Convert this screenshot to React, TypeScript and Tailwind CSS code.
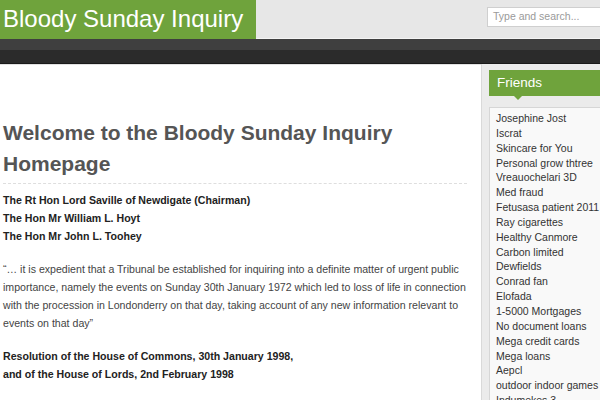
import React from "react";

const friends = [
  "Josephine Jost",
  "Iscrat",
  "Skincare for You",
  "Personal grow thtree",
  "Vreauochelari 3D",
  "Med fraud",
  "Fetusasa patient 2011",
  "Ray cigarettes",
  "Healthy Canmore",
  "Carbon limited",
  "Dewfields",
  "Conrad fan",
  "Elofada",
  "1-5000 Mortgages",
  "No document loans",
  "Mega credit cards",
  "Mega loans",
  "Aepcl",
  "outdoor indoor games",
  "Indumekes 3",
];

export default function App() {
  return (
    <div className="w-[600px] h-[400px] overflow-hidden bg-white" style={{ fontFamily: '"Liberation Sans", Arial, sans-serif' }}>
      <div className="w-[660px]">
        {/* Header */}
        <div className="flex h-[39px] bg-[#e7e7e7] border-b border-[#f4f4f4]">
          <div className="w-[256px] h-[39px] bg-[#6fa33c] flex items-center pl-[3px] pb-[2px]">
            <span className="text-white text-[24px] leading-none">Bloody Sunday Inquiry</span>
          </div>
          <div className="ml-[231px] mt-[7px] w-[170px] h-[20px] bg-white border border-[#cfcfcf] flex items-center pl-[5px]">
            <span className="text-[10.5px] text-[#9a9a9a]">Type and search...</span>
          </div>
        </div>
        {/* Dark bar */}
        <div className="h-[11px] bg-[#3f3f3f]" />
        <div className="h-[14px] bg-[#2b2b2b] border-b border-[#1a1a1a]" />
        <div className="flex">
          {/* Main */}
          <div className="w-[481px] shrink-0 pl-[3px] pr-[14px] pt-[52px] border-t border-[#e2e2e2]">
            <h1 className="text-[21px] leading-[31px] font-bold text-[#555555] pb-[4px] border-b border-dashed border-[#dedede]">
              Welcome to the Bloody Sunday Inquiry Homepage
            </h1>
            <div className="mt-[7px] text-[10.6px] leading-[18px] font-bold text-[#222222]">
              <div>The Rt Hon Lord Saville of Newdigate (Chairman)</div>
              <div>The Hon Mr William L. Hoyt</div>
              <div>The Hon Mr John L. Toohey</div>
            </div>
            <p className="mt-[15px] text-[10.6px] leading-[18px] text-[#444444]">
              “… it is expedient that a Tribunal be established for inquiring into a definite matter of urgent public importance, namely the events on Sunday 30th January 1972 which led to loss of life in connection with the procession in Londonderry on that day, taking account of any new information relevant to events on that day”
            </p>
            <div className="mt-[15px] text-[10.6px] leading-[18px] font-bold text-[#222222]">
              <div>Resolution of the House of Commons, 30th January 1998,</div>
              <div>and of the House of Lords, 2nd February 1998</div>
            </div>
          </div>
          {/* Sidebar */}
          <div className="flex-1 bg-[#ebebeb] border-l border-[#d9d9d9] pl-[7px] pt-[6px] h-[340px]">
            <div className="relative h-[26px] bg-[#6fa33c] flex items-center pl-[8px]">
              <span className="text-white text-[13.5px]">Friends</span>
              <div className="absolute left-[25px] top-[26px] w-0 h-0 border-l-[4px] border-r-[4px] border-t-[4px] border-l-transparent border-r-transparent border-t-[#6fa33c]" />
            </div>
            <div className="mt-[11px] bg-[#f9f9f9] border border-[#d6d6d6] pl-[6px] pt-[3px]">
              {friends.map((f) => (
                <div key={f} className="text-[10.5px] leading-[14.85px] text-[#333333] whitespace-nowrap">
                  {f}
                </div>
              ))}
            </div>
          </div>
        </div>
      </div>
    </div>
  );
}
